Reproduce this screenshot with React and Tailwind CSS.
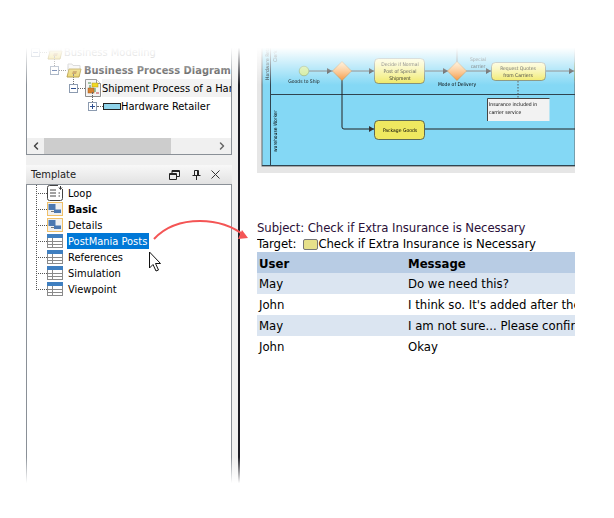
import { ChevronLeft, ChevronRight } from "lucide-react";

const font = "font-['DejaVu_Sans_Condensed','Liberation_Sans',sans-serif]";

function Toggle({ open, up }) {
  return (
    <span className="relative flex h-[9px] w-[9px] shrink-0 items-center justify-center border border-[#8c9bb0] bg-white">
      {up && <span className="absolute bottom-[8px] left-[3px] h-[10px] border-l border-dotted border-[#666]" />}
      <span className="h-px w-[5px] bg-[#2f4f8f]" />
      {!open && <span className="absolute h-[5px] w-px bg-[#2f4f8f]" />}
    </span>
  );
}

function FolderIcon() {
  return (
    <svg width="16" height="16" viewBox="0 0 16 16" className="shrink-0">
      <path d="M2 2h4l1 1.500h7v5H2z" fill="#f3f3f3" stroke="#b5b5b5" />
      <path d="M1 15l2-8h12l-2 8z" fill="#e8cf55" stroke="#a88a20" />
      <path d="M6 12l1-3h4l-1 3z" fill="#b8862a" />
    </svg>
  );
}

function DiagramIcon() {
  return (
    <svg width="16" height="18" viewBox="0 0 16 18" className="shrink-0">
      <path d="M.5 .5h11l4 4v13H.5z" fill="#f4f4f4" stroke="#8d8d8d" />
      <path d="M11.500 .5v4h4" fill="#fff" stroke="#8d8d8d" />
      <rect x="7" y="4" width="6" height="4" fill="#f2d820" stroke="#a89510" strokeWidth=".5" />
      <rect x="3" y="9" width="6" height="5" fill="#d8812f" stroke="#9c5a1c" strokeWidth=".5" />
      <path d="M3 4h3M5 6v3M10 9v4" stroke="#4b8b4b" />
      <path d="M11 14h3" stroke="#c04040" />
    </svg>
  );
}

function PoolIcon() {
  return (
    <span className="h-[7px] w-[18px] shrink-0 border border-[#222] bg-[#8fd3ea]" />
  );
}

function TableIcon() {
  return (
    <svg width="16" height="14" viewBox="0 0 16 14" className="shrink-0">
      <rect x=".5" y=".5" width="15" height="13" fill="#fff" stroke="#8a8a8a" />
      <rect x="0" y="0" width="16" height="4" fill="#3f7fc0" />
      <path d="M0 7.500h16M0 10.500h16M5.500 4v10" stroke="#8a8a8a" />
    </svg>
  );
}

function ShapeIcon() {
  return (
    <svg width="16" height="14" viewBox="0 0 16 14" className="shrink-0">
      <rect x=".5" y=".5" width="15" height="13" fill="#f0f0f0" stroke="#f0c068" />
      <rect x="1.500" y="2" width="7" height="6" fill="#4c78b0" />
      <rect x="7" y="7.500" width="7" height="3.500" fill="#4c78b0" />
      <path d="M4 9.500h3" stroke="#777" />
    </svg>
  );
}

function LoopIcon() {
  return (
    <svg width="16" height="16" viewBox="0 0 16 16" className="shrink-0">
      <rect x=".5" y=".5" width="15" height="15" rx="2" fill="#fff" stroke="#444" />
      <path d="M3 5h6M3 8h6M3 11h6" stroke="#444" />
      <path d="M11.500 8h1.500M11.500 11h1.500" stroke="#444" />
      <path d="M11 0h5v4h-5z" fill="#fff" />
      <path d="M13.500 1v3M12 2.500l1.500 2 1.500-2" fill="none" stroke="#333" />
    </svg>
  );
}

const templates = [
  { name: "Loop", icon: <LoopIcon /> },
  { name: "Basic", icon: <ShapeIcon />, bold: true },
  { name: "Details", icon: <ShapeIcon /> },
  { name: "PostMania Posts", icon: <TableIcon />, selected: true },
  { name: "References", icon: <TableIcon /> },
  { name: "Simulation", icon: <TableIcon /> },
  { name: "Viewpoint", icon: <TableIcon /> },
];

const posts = [
  { user: "May", message: "Do we need this?", tint: true },
  { user: "John", message: "I think so. It's added after the last review" },
  { user: "May", message: "I am not sure... Please confirm with them", tint: true },
  { user: "John", message: "Okay" },
];

function Diamond({ x, y }) {
  return (
    <polygon
      points={`${x},${y - 9.5} ${x + 9.5},${y} ${x},${y + 9.5} ${x - 9.5},${y}`}
      fill="url(#orange)"
      stroke="#b9782e"
      strokeWidth=".6"
    />
  );
}

function Arrow({ x, y }) {
  return <polygon points={`${x - 5},${y - 3} ${x},${y} ${x - 5},${y + 3}`} fill="#333" />;
}

function Diagram() {
  const label = { fontFamily: "DejaVu Sans Condensed, Liberation Sans, sans-serif", fontSize: 5, fill: "#000", textAnchor: "middle" };
  const left = { ...label, textAnchor: "start" };
  return (
    <svg width="318" height="173" viewBox="257 0 318 173" className="block blur-[0.4px]">
      <defs>
        <linearGradient id="orange" x1="0" y1="0" x2="0" y2="1">
          <stop offset="0" stopColor="#ffd9a0" />
          <stop offset="1" stopColor="#f58a2c" />
        </linearGradient>
        <linearGradient id="task" x1="0" y1="0" x2="0" y2="1">
          <stop offset="0" stopColor="#fbf8b8" />
          <stop offset="1" stopColor="#efe860" />
        </linearGradient>
      </defs>
      <rect x="257" y="0" width="318" height="173" fill="#e6e6e6" />
      <rect x="262" y="0" width="313" height="166" fill="#84d8f5" stroke="#666" />
      <path d="M270.500 0v166M270 94.500h305M262 165.500h313" stroke="#2f4450" fill="none" />

      <text transform="translate(268.500 80) rotate(-90)" style={left}>Hardware Retailer</text>
      <text transform="translate(277 62) rotate(-90)" style={left}>Clerk</text>
      <text transform="translate(277 152) rotate(-90)" style={left}>warehouse Worker</text>

      <path d="M309 71h24M351 71h23M425 71h23M466 71h25M546 71h29M457 40v22" stroke="#555" fill="none" />
      <path d="M342 80v47q0 2 2 2h30M425 129h150" stroke="#222" fill="none" />
      <path d="M518 81v17" stroke="#555" strokeDasharray="1.500 1.500" />
      <Arrow x={332} y={71} />
      <Arrow x={374} y={71} />
      <Arrow x={448} y={71} />
      <Arrow x={491} y={71} />
      <Arrow x={374} y={129} />
      <Arrow x={574} y={71} />

      <circle cx="304" cy="71" r="4.800" fill="#c8e88a" stroke="#6b8a4a" strokeWidth=".6" />
      <text x="304" y="83" style={label}>Goods to Ship</text>
      <Diamond x={342} y={71} />
      <rect x="374.500" y="58.500" width="50" height="25" rx="4" fill="url(#task)" stroke="#555" strokeWidth=".6" />
      <text x="400" y="66" style={label}>Decide if Normal</text>
      <text x="400" y="73" style={label}>Post of Special</text>
      <text x="400" y="80" style={label}>Shipment</text>
      <Diamond x={457} y={71} />
      <text x="457" y="86" style={label}>Mode of Delivery</text>
      <text x="478" y="61" style={label}>Special</text>
      <text x="478" y="68" style={label}>carrier</text>
      <rect x="491.500" y="62.500" width="54" height="18" rx="4" fill="url(#task)" stroke="#555" strokeWidth=".6" />
      <text x="518" y="70" style={label}>Request Quotes</text>
      <text x="518" y="77" style={label}>from Carriers</text>
      <rect x="574.500" y="62.500" width="6" height="18" fill="#7a9a4a" />

      <rect x="487.500" y="98.500" width="62" height="22.500" fill="#f2f2f2" />
      <path d="M487.500 121V98.500h62" fill="none" stroke="#444" />
      <text x="489" y="106" style={left}>Insurance included in</text>
      <text x="489" y="114" style={left}>carrier service</text>

      <rect x="374.500" y="120.500" width="50" height="19" rx="4" fill="#efe860" stroke="#333" strokeWidth=".7" />
      <text x="400" y="132" style={label}>Package Goods</text>
    </svg>
  );
}

export default function App() {
  return (
    <div className={`relative flex h-[518px] w-[614px] overflow-hidden bg-white text-[11px] text-black ${font}`}>
      {/* left dock */}
      <div className="ml-[26px] flex h-full w-[214px] border-r-2 border-[#1c1c24] bg-[#f0f0f0]">
        <div className="flex w-[206px] flex-col">
          <div className="flex h-[155px] flex-col overflow-hidden whitespace-nowrap border-x border-b border-[#8a9097] bg-white">
            <div className="flex-1 pt-[43px]">
              <div className="flex h-[18px] items-center pl-[4px] text-[#888]">
                <Toggle open />
                <span className="w-[7px] border-t border-dotted border-[#666]" />
                <FolderIcon />
                <span className="ml-[1px] pt-[2px]">Business Modeling</span>
              </div>
              <div className="flex h-[18px] items-center pl-[23px]">
                <Toggle open up />
                <span className="w-[7px] border-t border-dotted border-[#666]" />
                <FolderIcon />
                <span className="ml-[2px] pt-[2px] font-bold text-[#333]">Business Process Diagram</span>
              </div>
              <div className="flex h-[18px] items-center pl-[42px]">
                <Toggle open up />
                <span className="w-[7px] border-t border-dotted border-[#666]" />
                <DiagramIcon />
                <span className="ml-[1px] h-[18px] flex-1 overflow-hidden bg-[#f2f2f2] leading-[20px]">Shipment Process of a Hardware Retailer</span>
              </div>
              <div className="flex h-[18px] items-center pl-[61px]">
                <Toggle up />
                <span className="w-[6px] border-t border-dotted border-[#666]" />
                <PoolIcon />
                <span className="pt-[2px]">Hardware Retailer</span>
              </div>
            </div>
            <div className="flex h-[16px] items-center bg-[#f0f0f0]">
              <div className="flex w-[17px] justify-center">
                <ChevronLeft size={12} strokeWidth={3} className="text-[#444]" />
              </div>
              <div className="h-full w-[127px] bg-[#cdcdcd]" />
              <div className="flex flex-1 justify-end pr-[3px]">
                <ChevronRight size={12} strokeWidth={3} className="text-[#666]" />
              </div>
            </div>
          </div>

          <div className="mt-[10px] flex h-[19px] items-center bg-gradient-to-b from-[#f8f8f8] to-[#e2e2e2] pl-[5px] pr-[12px]">
            <span className="flex-1 pt-[2px] text-[#222]">Template</span>
            <svg width="11" height="10" viewBox="0 0 11 10" className="mr-[12px]">
              <path d="M.5 3.500h7v6h-7zM.5 4.500h7M3 3.500v-3h7.500v6H8M3 1.500h7.500" fill="none" stroke="#222" />
            </svg>
            <svg width="9" height="10" viewBox="0 0 9 10" className="mr-[10px]">
              <path d="M2.500.5h4v5h-4zM.5 5.500h8M4.500 5.500V10M5.500 .5v5" fill="none" stroke="#222" />
            </svg>
            <svg width="9" height="9" viewBox="0 0 9 9">
              <path d="M.5.5l8 8M8.500.5l-8 8" fill="none" stroke="#333" />
            </svg>
          </div>

          <div className="relative flex-1 border border-[#8a9097] bg-white pl-[9px]">
            <span className="absolute left-[9px] top-0 h-[105px] border-l border-dotted border-[#555]" />
            {templates.map((t) => (
              <div key={t.name} className="flex h-4 items-center">
                <span className="w-[11px] border-t border-dotted border-[#555]" />
                {t.icon}
                <span
                  className={`ml-[4px] h-4 whitespace-nowrap px-[1px] pr-[2px] leading-[18px] ${t.bold ? "font-bold" : ""} ${t.selected ? "bg-[#0078d7] text-white" : ""}`}
                >
                  {t.name}
                </span>
              </div>
            ))}
          </div>
        </div>
      </div>

      {/* document preview */}
      <div className="ml-[17px] w-[318px] overflow-hidden text-[13px]">
        <Diagram />
        <div className="mt-[46px] h-[17px] whitespace-nowrap leading-[17px] tracking-[-0.07px] text-[#2a1038]">
          Subject: Check if Extra Insurance is Necessary
        </div>
        <div className="flex h-[16px] items-center whitespace-nowrap leading-[16px] tracking-[-0.07px]">
          <span>Target:</span>
          <span className="ml-[7px] h-[11px] w-[15px] rounded-[2px] border border-[#777] bg-[#e6e08a]" />
          <span>Check if Extra Insurance is Necessary</span>
        </div>
        <div className="flex h-[21px] items-center bg-[#b8cce4] pt-[2px] font-bold">
          <span className="w-[151px] pl-[2px]">User</span>
          <span>Message</span>
        </div>
        {posts.map((p, i) => (
          <div key={i} className={`flex h-[21px] items-center whitespace-nowrap ${p.tint ? "bg-[#dbe5f1]" : ""}`}>
            <span className="w-[151px] shrink-0 pl-[2px]">{p.user}</span>
            <span>{p.message}</span>
          </div>
        ))}
      </div>

      {/* fades and callout on top of everything */}
      <div className="absolute left-0 top-0 h-[85px] w-full bg-gradient-to-b from-white from-[56%] to-transparent" />
      <div className="absolute bottom-0 left-0 h-[61px] w-full bg-gradient-to-b from-transparent to-white to-[43%]" />

      <svg width="120" height="60" viewBox="0 0 120 60" className="absolute left-[145px] top-[215px]">
        <path d="M9 24C22 10 40 6 55 6C75 6 90 13 100 21" fill="none" stroke="#f45555" strokeWidth="2" />
        <path d="M97 15l6 8-10 1z" fill="#f45555" />
        <path d="M4.500 37v16l3.500-3.500 3 6.500 2.500-1-3-6.500h5z" fill="#fff" stroke="#111" />
      </svg>
    </div>
  );
}
